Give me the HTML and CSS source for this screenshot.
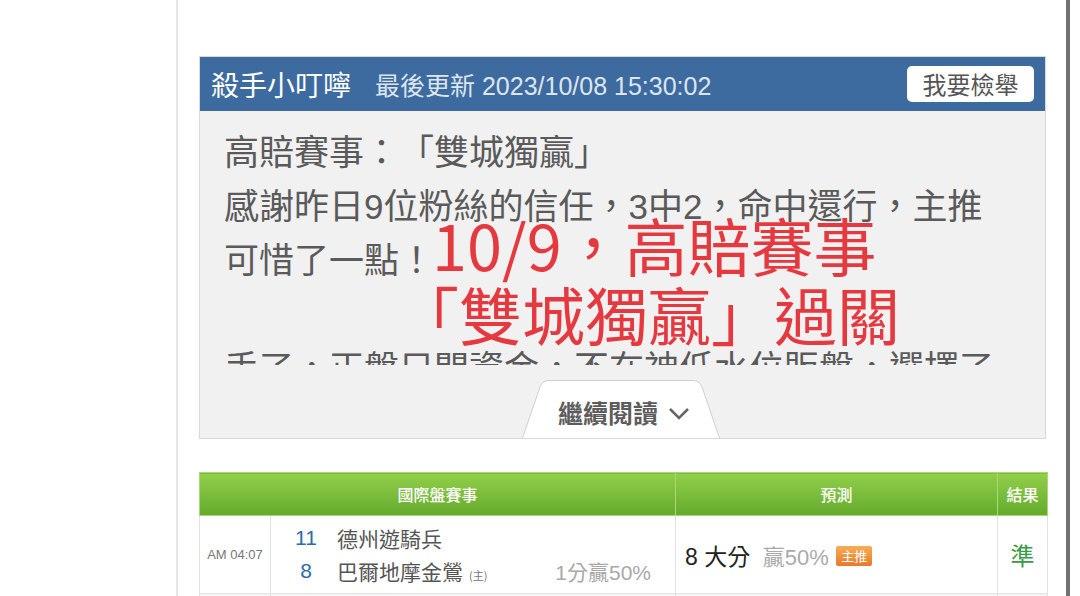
FILE: index.html
```html
<!DOCTYPE html>
<html lang="zh-Hant">
<head>
  <meta charset="UTF-8">
  <meta name="viewport" content="width=device-width, initial-scale=1.0">
  <link rel="stylesheet" href="styles.css">
  <title>殺手小叮嚀</title>
</head>
<body>
  <div class="page">

    <!-- tip card -->
    <section class="tip-card">
      <header class="tip-head">
        <h2 class="tip-title">殺手小叮嚀</h2>
        <span class="tip-updated">最後更新 2023/10/08 15:30:02</span>
        <button class="report-btn" type="button">我要檢舉</button>
      </header>

      <div class="tip-body">
        <div class="tip-text">
          <p>高賠賽事：「雙城獨贏」</p>
          <p>感謝昨日9位粉絲的信任，3中2，命中還行，主推可惜了一點！</p>
          <p>&nbsp;</p>
          <p>手了，正盤只開資金，不在神低水位販盤，選擇了好的賠率比較好發揮，今天依然</p>
        </div>

        <div class="stamp">
          <div class="stamp-line">10/9，高賠賽事</div>
          <div class="stamp-line stamp-line-2">「雙城獨贏」過關</div>
        </div>

        <div class="more-row">
          <a class="more-tab" href="#">
            <svg class="more-shape" width="198" height="58" viewBox="0 0 198 58">
              <path d="M0.5 58 L18 7 Q20.5 0.5 27 0.5 L171 0.5 Q177.5 0.5 180 7 L197.5 58" fill="#fff" stroke="#cfcfcf"/>
            </svg>
            <span class="more-label">繼續閱讀</span>
            <svg class="more-chevron" width="22" height="13" viewBox="0 0 22 13">
              <path d="M2 2 L11 11 L20 2" fill="none" stroke="#666" stroke-width="2.6"/>
            </svg>
          </a>
        </div>
      </div>
    </section>

    <!-- picks table -->
    <table class="picks">
      <colgroup>
        <col class="c-time">
        <col class="c-teams">
        <col class="c-pick">
        <col class="c-result">
      </colgroup>
      <thead>
        <tr>
          <th colspan="2">國際盤賽事</th>
          <th>預測</th>
          <th>結果</th>
        </tr>
      </thead>
      <tbody>
        <tr>
          <td class="time">AM 04:07</td>
          <td class="teams">
            <div class="team">
              <span class="team-no">11</span>
              <span class="team-name">德州遊騎兵</span>
              <span class="line"></span>
            </div>
            <div class="team">
              <span class="team-no">8</span>
              <span class="team-name">巴爾地摩金鶯<small class="home">(主)</small></span>
              <span class="line">1分贏50%</span>
            </div>
          </td>
          <td class="pick">
            <span class="pick-main">8 大分</span>
            <span class="pick-rate">贏50%</span>
            <span class="badge">主推</span>
          </td>
          <td class="result">準</td>
        </tr>
        <tr class="next">
          <td class="time"></td>
          <td class="teams"></td>
          <td class="pick"></td>
          <td class="result"></td>
        </tr>
      </tbody>
    </table>

  </div>
</body>
</html>
```

FILE: styles.css
```css
html, body {
  margin: 0;
  background-color: #fff;
  font-family: "Liberation Sans", "Noto Sans CJK TC", sans-serif;
  color: #555;
  text-spacing-trim: space-all;
}

.page {
  box-sizing: border-box;
  width: 894px;
  height: 596px;
  margin-left: 176px;
  padding: 56px 20px 0 21px;
  border-left: 2px solid #e6e6e6;
  border-right: 4px solid #727272;
  overflow: hidden;
}

/* ---------- tip card ---------- */

.tip-card {
  border: 1px solid #d9d9d9;
  background-color: #f1f1f1;
}

.tip-head {
  display: flex;
  align-items: center;
  height: 54px;
  padding: 0 11px;
  background-color: #3e6b9f;
  color: #fff;
}

.tip-title {
  margin: 0 24px 0 0;
  font-size: 28px;
  font-weight: normal;
  font-family: "Noto Sans CJK TC", sans-serif;
}

.tip-updated {
  font-size: 25px;
  color: #dde5ef;
}

.report-btn {
  margin-left: auto;
  width: 127px;
  height: 36px;
  border: 0;
  border-radius: 5px;
  background-color: #fff;
  color: #555;
  font-family: "Noto Sans CJK TC", sans-serif;
  font-size: 24px;
  line-height: 36px;
  padding: 0;
  cursor: pointer;
}

.tip-body {
  position: relative;
}

.tip-text {
  height: 239px;
  padding: 15px 42px 0 24px;
  overflow: hidden;
  font-size: 35px;
  line-height: 54px;
  color: #5a5a5a;
}

.tip-text p {
  margin: 0;
}

.stamp {
  position: absolute;
  top: 98px;
  left: 232px;
  color: #e5383f;
  font-family: "Noto Sans CJK TC", sans-serif;
  font-size: 63px;
  line-height: 69px;
  white-space: nowrap;
}

.stamp-line-2 {
  margin-left: -36px;
}

.more-row {
  display: flex;
  justify-content: center;
  padding-top: 15px;
  padding-right: 3px;
}

.more-tab {
  position: relative;
  display: flex;
  align-items: center;
  justify-content: center;
  gap: 10px;
  width: 198px;
  height: 58px;
  padding: 6px 0 0 6px;
  box-sizing: border-box;
  text-decoration: none;
}

.more-shape {
  position: absolute;
  top: 0;
  left: 0;
}

.more-label {
  position: relative;
  font-family: "Noto Sans CJK TC", sans-serif;
  font-size: 25px;
  line-height: 36px;
  font-weight: bold;
  color: #5c5c5c;
}

.more-chevron {
  position: relative;
  margin-top: 2px;
}

/* ---------- picks table ---------- */

.picks {
  width: 848px;
  margin-top: 33px;
  border-collapse: collapse;
  table-layout: fixed;
}

.c-time { width: 71px; }
.c-teams { width: 405px; }
.c-pick { width: 322px; }
.c-result { width: 50px; }

.picks th {
  height: 42px;
  padding: 0;
  background: linear-gradient(#92cf4a, #64aa2d);
  border: 1px solid #a9d870;
  color: #fff;
  font-family: "Noto Sans CJK TC", sans-serif;
  font-size: 16px;
  font-weight: 500;
}

.picks td {
  height: 77px;
  padding: 0;
  border: 1px solid #e2e2e2;
  background-color: #fff;
  vertical-align: middle;
}

.picks td.time {
  font-size: 13px;
  color: #777;
  text-align: center;
}

.picks td.teams {
  padding-left: 14px;
}

.team {
  display: grid;
  grid-template-columns: 42px 190px 114px;
  align-items: center;
  column-gap: 10px;
  height: 33px;
}

.team-no {
  text-align: center;
  font-size: 21px;
  color: #2d6aa6;
}

.team-name {
  font-family: "Noto Sans CJK TC", sans-serif;
  font-size: 21px;
  color: #555;
  white-space: nowrap;
}

.home {
  margin-left: 6px;
  font-size: 11px;
  color: #777;
}

.line {
  text-align: right;
  font-size: 21px;
  color: #a8a8a8;
  white-space: nowrap;
}

.picks td.pick {
  padding-left: 9px;
}

.pick-main {
  font-size: 23px;
  color: #222;
}

.pick-rate {
  margin-left: 8px;
  font-size: 22px;
  color: #aaa;
}

.badge {
  display: inline-block;
  position: relative;
  top: -4px;
  margin-left: 3px;
  padding: 0 5px;
  height: 20px;
  line-height: 20px;
  border-radius: 2px;
  background: linear-gradient(#f8ad55, #e8782a);
  color: #fff;
  font-family: "Noto Sans CJK TC", sans-serif;
  font-size: 13px;
}

.picks td.result {
  text-align: center;
  font-family: "Noto Sans CJK TC", sans-serif;
  font-size: 24px;
  color: #3b9a44;
}

.picks tr.next td {
  background-color: #f5f5f5;
}
```
